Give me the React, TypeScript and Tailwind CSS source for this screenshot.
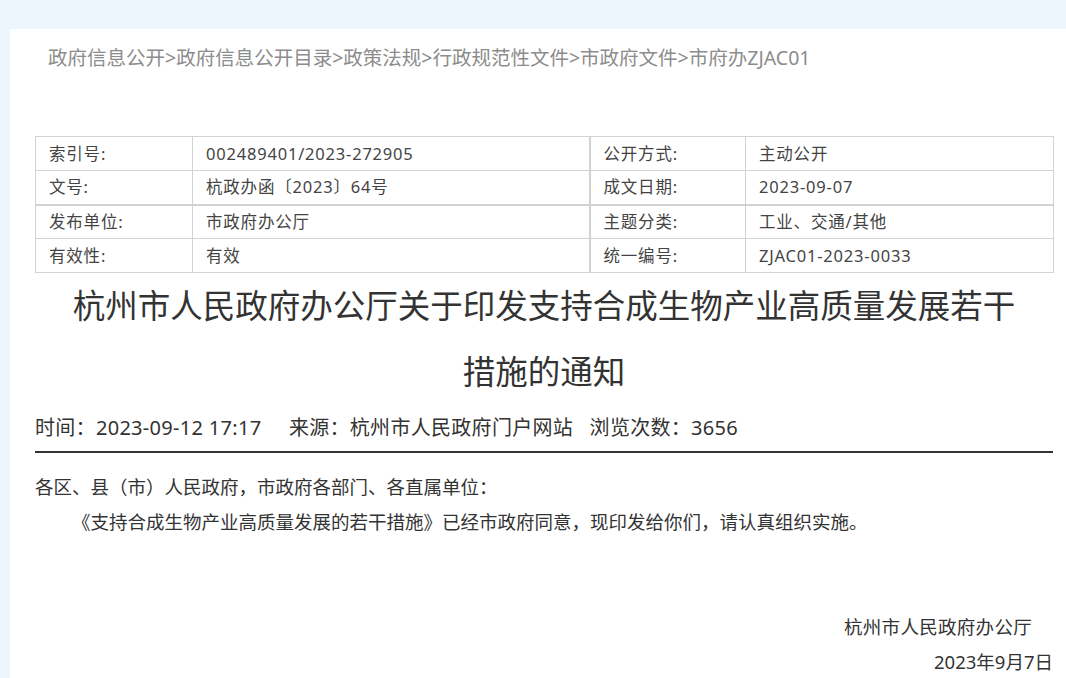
import React from "react";

const FONT = { fontFamily: '"Noto Sans", "Noto Sans CJK SC", sans-serif' };

const rows: [string, string, string, string][] = [
  ["索引号:", "002489401/2023-272905", "公开方式:", "主动公开"],
  ["文号:", "杭政办函〔2023〕64号", "成文日期:", "2023-09-07"],
  ["发布单位:", "市政府办公厅", "主题分类:", "工业、交通/其他"],
  ["有效性:", "有效", "统一编号:", "ZJAC01-2023-0033"],
];

export default function App() {
  return (
    <div
      className="min-h-[678px] bg-[#eef6fd] pt-[29px] pl-[10px] [text-spacing-trim:space-all]"
      style={FONT}
    >
      <div className="bg-white min-h-[700px] pl-[25px] pr-[13px] pt-[14px]">
        <div className="pl-[13px] text-[19.5px] leading-[30px] text-[#8c8c8c] whitespace-nowrap">
          政府信息公开&gt;政府信息公开目录&gt;政策法规&gt;行政规范性文件&gt;市政府文件&gt;市府办ZJAC01
        </div>

        <table className="mt-[63px] w-[1018px] border-collapse table-fixed text-[16.5px] tracking-[0.8px] text-[#444]">
          <colgroup>
            <col className="w-[157px]" />
            <col className="w-[397px]" />
            <col className="w-[156px]" />
            <col className="w-[308px]" />
          </colgroup>
          <tbody>
            {rows.map((r, i) => (
              <tr key={i} className="h-[34px]">
                {r.map((c, j) => (
                  <td
                    key={j}
                    className={
                      "border border-[#d2d2d2] pl-[13px] leading-[32px] whitespace-nowrap " +
                      (i === 1 ? "border-b-2 " : "") +
                      (j === 1 ? "border-r-2 " : "")
                    }
                  >
                    {c}
                  </td>
                ))}
              </tr>
            ))}
          </tbody>
        </table>

        <h1 className="w-[1018px] px-[30px] text-center text-[32.5px] leading-[66px] text-[#333] font-normal">
          杭州市人民政府办公厅关于印发支持合成生物产业高质量发展若干措施的通知
        </h1>

        <div className="w-[1018px] border-b-2 border-[#333] pt-[8px] pb-[8px] text-[20px] leading-[30px] tracking-[0.3px] text-[#333] whitespace-pre">
          {"时间：2023-09-12 17:17     来源：杭州市人民政府门户网站   浏览次数：3656"}
        </div>

        <div className="w-[1018px] pt-[16px] text-[18.5px] leading-[35px] text-[#333]">
          <p>各区、县（市）人民政府，市政府各部门、各直属单位：</p>
          <p className="indent-[2em]">
            《支持合成生物产业高质量发展的若干措施》已经市政府同意，现印发给你们，请认真组织实施。
          </p>
          <p className="mt-[70px] text-right pr-[21px] tracking-[0.3px]">杭州市人民政府办公厅</p>
          <p className="text-right">2023年9月7日</p>
        </div>
      </div>
    </div>
  );
}
